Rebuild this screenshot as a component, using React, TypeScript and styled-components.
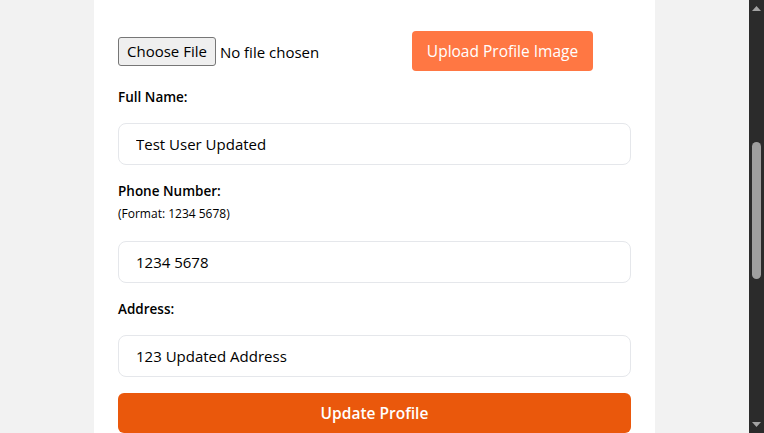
import React, { useState } from 'react';
import styled, { createGlobalStyle } from 'styled-components';

const GlobalStyle = createGlobalStyle`
  html, body, #root {
    height: 100%;
  }
  body {
    margin: 0;
    background: #f2f2f2;
    font-family: 'Open Sans', 'Noto Sans', sans-serif;
    color: #000;
    overflow: hidden;
  }
  * {
    box-sizing: border-box;
  }
`;

// window scroll position as shown in the shot (px of thumb offset / length)
const SCROLL = { offset: 125, length: 137 };

const App = () => {
  const [profile, setProfile] = useState({
    name: 'Test User Updated',
    phone: '1234 5678',
    address: '123 Updated Address'
  });

  const update = (key: keyof typeof profile) => (e: React.ChangeEvent<HTMLInputElement>) =>
    setProfile({ ...profile, [key]: e.target.value });

  return (
    <Screen>
      <GlobalStyle />
      <Main>
        <Card>
          <UploadRow>
            <FileInput type="file" accept="image/*" />
            <UploadButton type="button">Upload Profile Image</UploadButton>
          </UploadRow>

          <Field>
            <Label htmlFor="name">Full Name:</Label>
            <TextInput id="name" value={profile.name} onChange={update('name')} />
          </Field>

          <Field>
            <Label htmlFor="phone">Phone Number:</Label>
            <Hint>(Format: 1234 5678)</Hint>
            <TextInput id="phone" value={profile.phone} onChange={update('phone')} />
          </Field>

          <Field>
            <Label htmlFor="address">Address:</Label>
            <TextInput id="address" value={profile.address} onChange={update('address')} />
          </Field>

          <SubmitButton type="submit">Update Profile</SubmitButton>
        </Card>
      </Main>

      <ScrollRail>
        <Arrow>
          <svg width="9" height="5" viewBox="0 0 9 5">
            <path d="M4.5 0 L9 5 L0 5 Z" fill="#a3a3a3" />
          </svg>
        </Arrow>
        <Track>
          <Thumb style={{ marginTop: SCROLL.offset, height: SCROLL.length }} />
        </Track>
        <Arrow>
          <svg width="9" height="5" viewBox="0 0 9 5">
            <path d="M0 0 L9 0 L4.5 5 Z" fill="#a3a3a3" />
          </svg>
        </Arrow>
      </ScrollRail>
    </Screen>
  );
};

const Screen = styled.div`
  display: flex;
  height: 100vh;
  overflow: hidden;
`;

const Main = styled.main`
  flex: 1;
  display: flex;
  justify-content: center;
  align-items: flex-start;
  overflow: hidden;
`;

const Card = styled.form`
  width: 561px;
  background: #fff;
  padding: 31px 24px 24px;
  display: flex;
  flex-direction: column;
  gap: 16px;
`;

const UploadRow = styled.div`
  display: flex;
  align-items: center;
`;

const FileInput = styled.input`
  width: 294px;
  font-family: inherit;
  font-size: 15px;
  color: #000;

  &::file-selector-button {
    height: 29px;
    margin-right: 4px;
    padding: 0 8px;
    border: 1px solid #767676;
    border-radius: 3px;
    background: #efefef;
    color: #000;
    font-family: inherit;
    font-size: 15px;
  }
`;

const UploadButton = styled.button`
  height: 40px;
  width: 181px;
  border: none;
  border-radius: 4px;
  background: #ff7743;
  color: #fff;
  font-family: inherit;
  font-size: 15.5px;
  cursor: pointer;
`;

const Field = styled.div`
  display: flex;
  flex-direction: column;
`;

const Label = styled.label`
  font-size: 13.5px;
  font-weight: 600;
  line-height: 20px;
  margin-bottom: 16px;
`;

const Hint = styled.small`
  font-size: 12px;
  line-height: 18px;
  margin: -12px 0 18px;
`;

const TextInput = styled.input`
  height: 42px;
  padding: 0 17px;
  border: 1px solid #e5e7eb;
  border-radius: 8px;
  font-family: inherit;
  font-size: 15px;
  color: #000;
  outline: none;
`;

const SubmitButton = styled.button`
  height: 40px;
  border: none;
  border-radius: 6px;
  background: #ea580c;
  color: #fff;
  font-family: inherit;
  font-size: 15.5px;
  font-weight: 600;
  cursor: pointer;
`;

const ScrollRail = styled.div`
  width: 15px;
  flex-shrink: 0;
  background: #2b2b2b;
  display: flex;
  flex-direction: column;
`;

const Arrow = styled.div`
  height: 17px;
  display: flex;
  align-items: center;
  justify-content: center;
`;

const Track = styled.div`
  flex: 1;
  display: flex;
  flex-direction: column;
  align-items: center;
`;

const Thumb = styled.div`
  width: 9px;
  border-radius: 5px;
  background: #9f9f9f;
`;

export default App;
